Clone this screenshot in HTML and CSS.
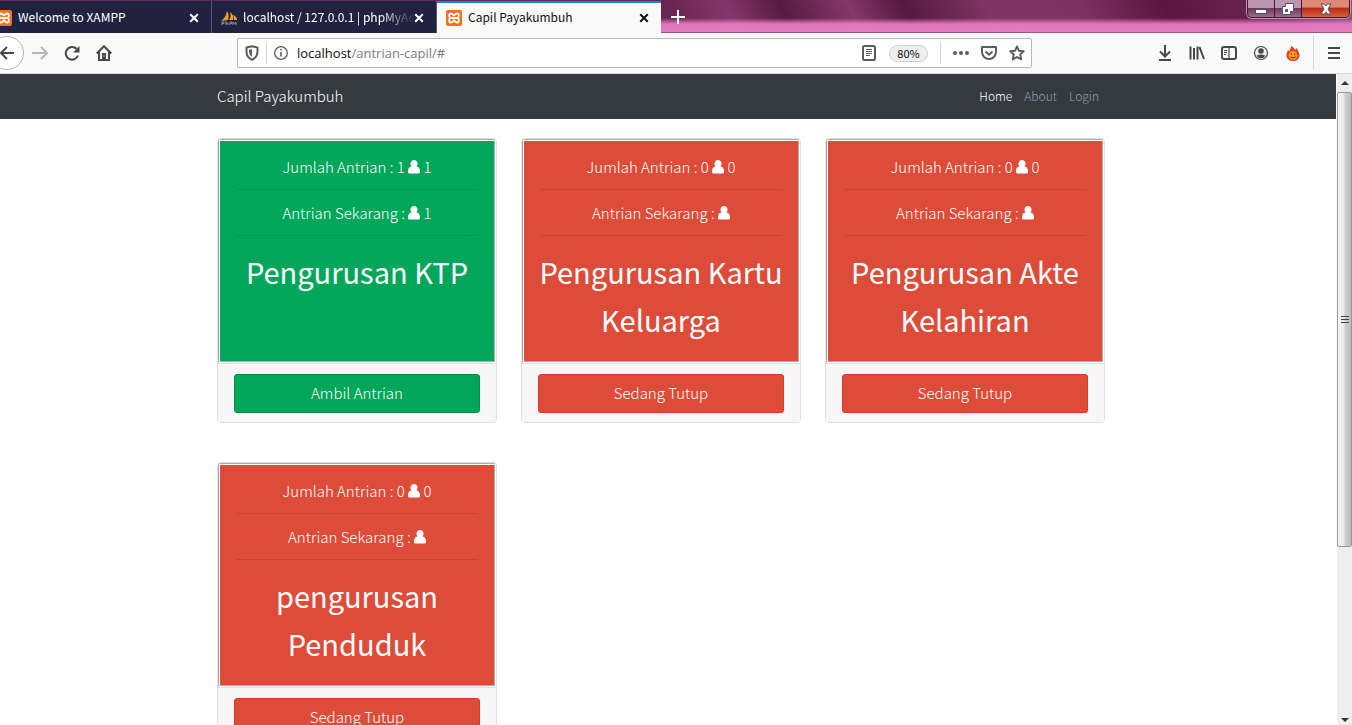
FILE: index.html
```html
<!DOCTYPE html>
<html lang="id">
<head>
<meta charset="utf-8">
<title>Capil Payakumbuh</title>
<link rel="stylesheet" href="styles.css">
</head>
<body>
<svg class="defs" aria-hidden="true">
  <symbol id="xampp" viewBox="0 0 16 16"><rect width="16" height="16" rx="2" fill="#f4731f"/><path d="M5 3.500C2.600 3.500 2.500 7 4.500 8C2.500 9 2.600 12.500 5 12.500C7 12.500 7 10.500 8 10.500S9 12.500 11 12.500C13.400 12.500 13.500 9 11.500 8C13.500 7 13.400 3.500 11 3.500C9 3.500 9 5.500 8 5.500S7 3.500 5 3.500ZM5.500 8H10.500" fill="none" stroke="#fff" stroke-width="1.800"/></symbol>
  <symbol id="close" viewBox="0 0 12 12"><path d="M1.500 1.500l9 9M10.500 1.500l-9 9" stroke="currentColor" stroke-width="2.400" fill="none"/></symbol>
  <symbol id="user" viewBox="0 0 12 14"><path d="M6 0a3.500 3.700 0 0 1 2.400 6.400C10.500 6.500 12 8 12 11v1a1.500 1.500 0 0 1-1.500 1.500h-9A1.500 1.500 0 0 1 0 12v-1C0 8 1.500 6.500 3.600 6.400A3.500 3.700 0 0 1 6 0Z" fill="currentColor"/></symbol>
</svg>

<header class="tabstrip">
  <div class="tab tab-first">
    <svg class="favicon"><use href="#xampp"/></svg>
    <span class="tab-title">Welcome to XAMPP</span>
    <button class="tab-close" aria-label="Close tab"><svg class="x"><use href="#close"/></svg></button>
  </div>
  <div class="tab">
    <svg class="favicon" viewBox="0 0 16 16"><path d="M0 11C3 9 5 6 6 1c2 3 2 6 1 9ZM8 10c2-2 2-5 1-8 3 2 4 5 3 8ZM13 10c0-2 0-3-1-5 3 1 4 3 4 5Z" fill="#f89c2a"/><path d="M1 15v-3h2v1.500H1M5 11v4m0-2h2v2M9 15v-3h2v1.500H9M12 15v-3l1.500 2L15 12v3" stroke="#8a8aa8" fill="none"/></svg>
    <span class="tab-title faded">localhost / 127.0.0.1 | phpMyAd</span>
    <button class="tab-close" aria-label="Close tab"><svg class="x"><use href="#close"/></svg></button>
  </div>
  <div class="tab active">
    <svg class="favicon"><use href="#xampp"/></svg>
    <span class="tab-title">Capil Payakumbuh</span>
    <button class="tab-close" aria-label="Close tab"><svg class="x"><use href="#close"/></svg></button>
  </div>
  <button class="new-tab" aria-label="New tab"><svg width="14" height="14" viewBox="0 0 14 14"><path d="M7 0v14M0 7h14" stroke="#fff" stroke-width="2"/></svg></button>
  <div class="window-controls">
    <button aria-label="Minimize"><svg width="12" height="12" viewBox="0 0 12 12"><rect x=".5" y="6.500" width="11" height="4" fill="#fff" stroke="#505068"/></svg></button>
    <button aria-label="Restore"><svg width="12" height="12" viewBox="0 0 12 12"><path d="M3.500.5h8v8h-3v3h-8v-8h3Z" fill="#fff" stroke="#505068"/><path d="M3.500 6.500h2v2h-2Z" fill="#725070" stroke="#505068"/></svg></button>
    <button class="quit" aria-label="Close"><svg width="12" height="12" viewBox="0 0 12 12"><path d="M1 1h3.500L6 3l1.500-2H11L8 6l3 5H7.500L6 9l-1.500 2H1l3-5Z" fill="#fff" stroke="#505068"/></svg></button>
  </div>
</header>

<nav class="toolbar" aria-label="Browser">
  <div class="nav-buttons">
    <button class="back" aria-label="Back"><svg width="16" height="16" viewBox="0 0 16 16"><path d="M15 8H2M8 2L2 8l6 6" fill="none" stroke="currentColor" stroke-width="2"/></svg></button>
    <button class="forward" aria-label="Forward"><svg width="16" height="16" viewBox="0 0 16 16"><path d="M0 8h15M9 2l6 6-6 6" fill="none" stroke="currentColor" stroke-width="2"/></svg></button>
    <button aria-label="Reload"><svg width="16" height="16" viewBox="0 0 16 16"><path d="M14 10.500A6.300 6.300 0 1 1 12.500 3.800" fill="none" stroke="currentColor" stroke-width="2"/><path d="M15.500 1v6.500H9Z" fill="currentColor"/></svg></button>
    <button aria-label="Home"><svg width="16" height="16" viewBox="0 0 16 16"><path d="M.7 8.500L8 1.200l7.300 7.300M3 7v8h10V7" fill="none" stroke="currentColor" stroke-width="2"/><path d="M6 8h4v6H6Z" fill="currentColor"/><path d="M8 10.500v1" stroke="#fff"/></svg></button>
  </div>
  <div class="urlbar">
    <svg width="16" height="16" viewBox="0 0 16 16"><path d="M2.500 2.500L8 1.200l5.500 1.300v4C13.500 10.500 11 13.500 8 14.800 5 13.500 2.500 10.500 2.500 6.500Z" fill="none" stroke="currentColor" stroke-width="2"/><path d="M8 4v8C6 10.500 5 9 5 5Z" fill="currentColor"/></svg>
    <i class="sep"></i>
    <svg width="16" height="16" viewBox="0 0 16 16"><circle cx="8" cy="8" r="6.300" fill="none" stroke="currentColor" stroke-width="1.300"/><path d="M8 7v4.500M8 4v1.600" stroke="currentColor" stroke-width="1.600"/></svg>
    <label class="host" for="url">localhost</label><input class="url" id="url" type="text" value="/antrian-capil/#">
    <button aria-label="Reader view"><svg width="16" height="16" viewBox="0 0 16 16"><rect x="2" y="1" width="12" height="14" rx="1.500" fill="none" stroke="currentColor" stroke-width="2"/><path d="M5 4.500h6M5 6.500h6M5 8.500h6M5 10.500h4" stroke="currentColor"/></svg></button>
    <button class="zoom">80%</button>
    <i class="sep"></i>
    <button aria-label="Page actions"><svg width="16" height="16" viewBox="0 0 16 16"><g fill="currentColor"><circle cx="2" cy="8" r="2"/><circle cx="8" cy="8" r="2"/><circle cx="14" cy="8" r="2"/></g></svg></button>
    <button aria-label="Pocket"><svg width="16" height="16" viewBox="0 0 16 16"><path d="M1 2h14v5a7 7 0 0 1-14 0ZM4.500 6.500L8 9.700l3.500-3.200" fill="none" stroke="currentColor" stroke-width="2" stroke-linejoin="round"/></svg></button>
    <button aria-label="Bookmark"><svg width="16" height="16" viewBox="0 0 16 16"><path d="M8 1.500l2 4.300 4.800.5-3.600 3.200 1.100 4.900L8 12l-4.300 2.400 1.100-4.900L1.200 6.300 6 5.800Z" fill="none" stroke="currentColor" stroke-width="1.900" stroke-linejoin="round"/></svg></button>
  </div>
  <div class="tools">
    <button aria-label="Downloads"><svg width="16" height="16" viewBox="0 0 16 16"><path d="M8 0v11M3 6.500l5 5 5-5M2 15h12" fill="none" stroke="currentColor" stroke-width="2"/></svg></button>
    <button aria-label="Library"><svg width="16" height="16" viewBox="0 0 16 16"><path d="M1.500 1.500v13M5 3v11.500M8.500 1.500v13M10.500 2l4.500 12" stroke="currentColor" stroke-width="2" fill="none"/></svg></button>
    <button aria-label="Sidebar"><svg width="16" height="16" viewBox="0 0 16 16"><rect x="1" y="2" width="14" height="12" rx="2" fill="none" stroke="currentColor" stroke-width="2"/><path d="M8 2v12M3 5.500h3M3 7.500h3M3 9.500h2" stroke="currentColor" stroke-width="1.200"/></svg></button>
    <button aria-label="Account"><svg width="16" height="16" viewBox="0 0 16 16"><circle cx="8" cy="8" r="6.500" fill="none" stroke="currentColor" stroke-width="1.200"/><circle cx="8" cy="6" r="2.800" fill="currentColor"/><path d="M3.500 10.500q4.500-2 9 0Q11 13.300 8 13.300T3.500 10.500Z" fill="currentColor"/></svg></button>
    <button aria-label="Flame add-on"><svg width="16" height="16" viewBox="0 0 16 16"><path d="M6.500 0c0 2 3 2.500 3.500 5l2-2c0 2 2.500 4 2.500 7 0 4-3 6-6.500 6s-6.500-2-6.500-6c0-2 1-3 1.500-5l1.500 1.500C4.500 4 6.500 3 6.500 0Z" fill="#ea3f1c"/><circle cx="8" cy="10.500" r="4.400" fill="#f9a01e"/><path d="M6.300 8.500v1.500M9.700 8.500v1.500M5.300 12q2.700 2 5.400 0" stroke="#6a2408" fill="none"/></svg></button>
    <i class="sep tall"></i>
    <button aria-label="Menu"><svg width="16" height="16" viewBox="0 0 16 16"><path d="M2 3h12M2 8h12M2 13h12" stroke="currentColor" stroke-width="2"/></svg></button>
  </div>
</nav>

<div class="viewport">
  <div class="page">
    <nav class="navbar" aria-label="Site">
      <div class="container navbar-inner">
        <a class="brand" href="#">Capil Payakumbuh</a>
        <div class="links"><a class="current" href="#">Home</a><a href="#">About</a><a href="#">Login</a></div>
      </div>
    </nav>
    <main class="container cards">
      <article class="card open">
        <div class="card-body">
          <p>Jumlah Antrian : 1 <svg class="user"><use href="#user"/></svg> 1</p><hr>
          <p>Antrian Sekarang : <svg class="user"><use href="#user"/></svg> 1</p><hr>
          <h2>Pengurusan KTP</h2>
        </div>
        <div class="card-footer"><button class="btn">Ambil Antrian</button></div>
      </article>
      <article class="card">
        <div class="card-body">
          <p>Jumlah Antrian : 0 <svg class="user"><use href="#user"/></svg> 0</p><hr>
          <p>Antrian Sekarang : <svg class="user"><use href="#user"/></svg></p><hr>
          <h2>Pengurusan Kartu Keluarga</h2>
        </div>
        <div class="card-footer"><button class="btn">Sedang Tutup</button></div>
      </article>
      <article class="card">
        <div class="card-body">
          <p>Jumlah Antrian : 0 <svg class="user"><use href="#user"/></svg> 0</p><hr>
          <p>Antrian Sekarang : <svg class="user"><use href="#user"/></svg></p><hr>
          <h2>Pengurusan Akte Kelahiran</h2>
        </div>
        <div class="card-footer"><button class="btn">Sedang Tutup</button></div>
      </article>
      <article class="card">
        <div class="card-body">
          <p>Jumlah Antrian : 0 <svg class="user"><use href="#user"/></svg> 0</p><hr>
          <p>Antrian Sekarang : <svg class="user"><use href="#user"/></svg></p><hr>
          <h2>pengurusan Penduduk</h2>
        </div>
        <div class="card-footer"><button class="btn">Sedang Tutup</button></div>
      </article>
    </main>
  </div>
  <div class="scrollbar" aria-hidden="true">
    <svg class="arrow" viewBox="0 0 15 18"><path d="M4 11l4-4 4 4Z" fill="#333"/></svg>
    <div class="track"><div class="thumb"><svg width="8" height="8" viewBox="0 0 8 8"><path d="M0 .5h8M0 3.500h8M0 6.500h8" stroke="#444"/></svg></div></div>
    <svg class="arrow" viewBox="0 0 15 18"><path d="M4 11l4 4 4-4Z" fill="#333"/></svg>
  </div>
</div>
</body>
</html>
```

FILE: styles.css
```css
* { box-sizing: border-box; }
body {
  margin: 0;
  height: 100vh;
  display: flex;
  flex-direction: column;
  overflow: hidden;
  background: #fff;
  font-family: "Noto Sans CJK SC", sans-serif;
}
button { font: inherit; color: inherit; border: 0; background: none; padding: 0; }
svg { flex: none; display: block; }
.defs { position: absolute; width: 0; height: 0; }

/* Tab strip */
.tabstrip {
  flex: none;
  display: flex;
  height: 33px;
  padding-top: 1px;
  border-bottom: 1px solid #a0568c;
  color: #fff;
  font-size: 12px;
  background:
    linear-gradient(to bottom, transparent 18px, rgba(231, 123, 192, 0.95) 24px, #e57abf),
    linear-gradient(65deg, #6b2552 50%, #84366a 54%, #581a42 58%, #84376a 63%, #56183f 67%, #7d3563 73%, #7a3260 80%, #5a1540 86%, #6b2451 93%, #855577);
}
.tab {
  display: flex;
  align-items: center;
  width: 225px;
  height: 32px;
  padding: 0 12px 0 9px;
  background: #202340;
  border-right: 1px solid #55587a;
}
.tab-first { width: 212px; padding-left: 0; }
.tab-first .favicon { margin-left: -4px; }
.tab.active {
  width: 224px;
  background: #f9f9fa;
  color: #111;
  box-shadow: inset 0 2px #0a84ff;
  border-right: 0;
}
.favicon { width: 16px; height: 16px; margin-top: 2px; }
.tab-title { flex: 1; min-width: 0; margin-left: 6px; overflow: hidden; line-height: 20px; white-space: nowrap; }
.faded { margin-right: -4px; mask-image: linear-gradient(to right, #000 80%, transparent); }
.tab-close { padding: 8px 0 6px 4px; }
.x { width: 10px; height: 10px; }
.new-tab { padding: 0 10px; }
.window-controls {
  display: flex;
  height: 18px;
  margin-left: auto;
  margin-top: -1px;
  margin-right: 2px;
  border: 1px solid #3e1934;
  border-top: 0;
  border-radius: 0 0 5px 5px;
  overflow: hidden;
  box-shadow: 0 0 0 1px #c391b3;
}
.window-controls button {
  display: grid;
  place-items: center;
  width: 27px;
  border-right: 1px solid #3e1934;
  background: linear-gradient(#bb96ae 45%, #6e3a5e 50%, #9b6c8b);
}
.window-controls .quit { width: 47px; border: 0; background: linear-gradient(#dd8a78 40%, #b92b12 50%, #d4613c); }

/* Toolbar */
.toolbar {
  flex: none;
  display: flex;
  align-items: center;
  height: 41px;
  background: #f9f9fa;
  border-bottom: 1px solid #d8d8da;
  color: #48484c;
}
.nav-buttons { display: flex; align-items: center; gap: 16px; width: 237px; }
.back {
  display: grid;
  place-items: center;
  width: 34px;
  height: 34px;
  margin-left: -10px;
  margin-right: -8px;
  border: 1px solid #b5b5b7;
  border-radius: 50%;
  background: #fff;
}
.forward { color: #b5b5b7; }
.urlbar {
  flex: 1;
  display: flex;
  align-items: center;
  height: 30px;
  padding: 0 6px;
  border: 1px solid #b8b8ba;
  border-radius: 2px;
  background: #fff;
  color: #5c5c60;
  gap: 12px;
}
.sep { width: 1px; height: 22px; background: #d7d7db; }
.urlbar .sep { margin: 0 -6px; }
.urlbar .zoom + .sep { margin: 0; }
.host, .url { font-family: "Open Sans", sans-serif; font-size: 13px; color: #0c0c0d; }
.host { margin-left: -4px; }
.url { flex: 1; min-width: 0; margin-left: -12px; padding: 0; border: 0; outline: 0; color: #7a7a7e; }
.zoom {
  width: 39px;
  height: 17px;
  border: 1px solid #cfcfd2;
  border-radius: 9px;
  background: #eee;
  color: #0c0c0d;
  font-size: 11px;
  line-height: 15px;
}
.tools { display: flex; align-items: center; justify-content: flex-end; gap: 16px; width: 320px; padding-right: 10px; }
.tall { height: 34px; margin: 0 -4px 0 -4px; }

/* Viewport */
.viewport { flex: 1; min-height: 0; display: flex; }
.page { flex: 1; min-width: 0; margin-left: -14px; overflow: hidden; }
.container { width: 888px; margin: 0 auto; }
.navbar { background: #343a40; }
.navbar-inner { display: flex; align-items: center; justify-content: space-between; height: 45px; padding-bottom: 2px; }
.navbar a { color: #9a9da0; text-decoration: none; }
.navbar .brand { color: #fff; font-size: 15px; font-weight: 300; }
.links { display: flex; gap: 12px; padding-right: 6px; font-size: 12px; font-weight: 300; }
.navbar .current { color: #fff; }

/* Queue cards */
.cards { display: grid; grid-template-columns: repeat(3, 1fr); gap: 39px 24px; padding-top: 19px; }
.card {
  --tone: #dd4b39;
  --edge: #d73925;
  display: flex;
  flex-direction: column;
  border: 1px solid #dfdfdf;
  border-radius: 4px;
  overflow: hidden;
}
.open { --tone: #00a65a; --edge: #008d4c; }
.card-body {
  flex: 1;
  padding: 15px 16px 18px;
  border: 2px groove #fff;
  background: var(--tone);
  background-clip: padding-box;
  color: #fff;
  text-align: center;
}
.card-body p { margin: 0; font-size: 15px; line-height: 22px; font-weight: 300; }
.card-body hr { margin: 11px 0 12px; border: 0; border-top: 1px solid rgba(0, 0, 0, 0.1); }
.card-body hr:last-of-type { margin-bottom: 11px; }
.card-body h2 { margin: 0 -4px; font-size: 29px; line-height: 48px; font-weight: 400; }
.user { display: inline-block; width: 12px; height: 14px; vertical-align: -1px; }
.card-footer { padding: 10px 16px 9px; border-top: 1px solid #dfdfdf; background: #f7f7f7; }
.btn {
  display: block;
  width: 100%;
  height: 39px;
  padding-bottom: 2px;
  border: 1px solid var(--edge);
  border-radius: 3px;
  background: var(--tone);
  color: #fff;
  font-size: 15px;
  font-weight: 300;
}

/* Scrollbar */
.scrollbar { display: flex; flex-direction: column; width: 15px; margin-left: 1px; background: #eee; }
.arrow { width: 15px; height: 18px; }
.track { flex: 1; }
.thumb {
  display: grid;
  place-items: center;
  height: 74%;
  border: 1px solid #979797;
  border-radius: 2px;
  background: linear-gradient(to right, #f5f5f5, #e9e9eb 45%, #cfcfd2 55%, #bcbcc0);
}
```
